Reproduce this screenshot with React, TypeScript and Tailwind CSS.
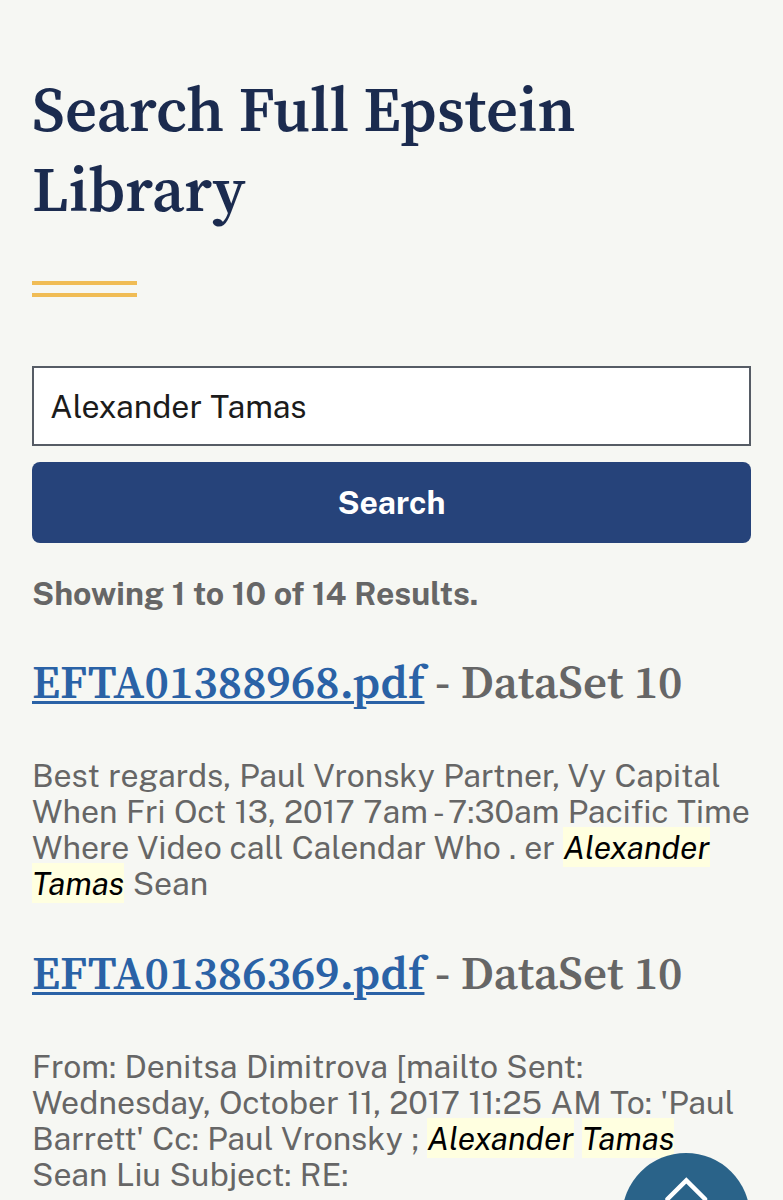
import type { ReactNode } from 'react'

interface Result {
  id: string
  file: string
  dataset: string
  excerpt: ReactNode
}

const results: Result[] = [
  {
    id: '1',
    file: 'EFTA01388968.pdf',
    dataset: 'DataSet 10',
    excerpt: (
      <>
        Best regards, Paul Vronsky Partner, Vy Capital
        <br />
        When Fri Oct 13, 2017 7am - 7:30am Pacific Time
        <br />
        Where Video call Calendar Who . er <Hit>Alexander</Hit>
        <br />
        <Hit>Tamas</Hit> Sean
      </>
    ),
  },
  {
    id: '2',
    file: 'EFTA01386369.pdf',
    dataset: 'DataSet 10',
    excerpt: (
      <>
        From: Denitsa Dimitrova [mailto Sent:
        <br />
        Wednesday, October 11, 2017 11:25 AM To: 'Paul
        <br />
        Barrett' Cc: Paul Vronsky ; <Hit>Alexander</Hit> <Hit>Tamas</Hit>
        <br />
        Sean Liu Subject: RE:
      </>
    ),
  },
]

export default function App() {
  return (
    <div className="relative h-[1200px] w-full overflow-hidden bg-[#f6f7f3] px-8 pt-[69px] font-['Public_Sans','Inter',sans-serif] text-[32px] leading-9 text-[#666]">
      <h1 className="font-['Source_Serif_4','Liberation_Serif',serif] text-[62.5px] font-semibold leading-[80px] tracking-[0.08px] text-[#1b2b4f]">
        Search Full Epstein Library
      </h1>

      <div className="mt-[52px] h-4 w-[105px] border-y-4 border-[#f0bc55]" />

      {/* Search form */}
      <form className="mt-[69px] flex flex-col gap-4" onSubmit={(e) => e.preventDefault()}>
        <input
          type="text"
          defaultValue="Alexander Tamas"
          className="h-20 w-full border-2 border-[#565c65] bg-white px-4 text-[#1b1b1b] outline-none [word-spacing:0.65px]"
        />
        <button type="submit" className="h-[81px] w-full rounded-lg bg-[#26437a] font-bold text-white">
          Search
        </button>
      </form>

      <p className="mt-[33px] font-bold [word-spacing:0.45px]">Showing 1 to 10 of 14 Results.</p>

      {/* Results */}
      <div className="mt-10 flex flex-col gap-[41px]">
        {results.map((result) => (
          <ResultItem key={result.id} result={result} />
        ))}
      </div>

      {/* Back to top */}
      <button
        aria-label="Back to top"
        className="absolute left-[622px] top-[1153px] flex size-32 justify-center rounded-full bg-[#2a6389]"
      >
        <svg width="48" height="40" viewBox="0 0 48 40" className="mt-5" fill="none" stroke="white" strokeWidth="4.5" strokeLinecap="round">
          <path d="M5.5 26 L24.3 7.5 L43 26" />
        </svg>
      </button>
    </div>
  )
}

function ResultItem({ result }: { result: Result }) {
  return (
    <article className="whitespace-nowrap">
      <h3 className="font-['Source_Serif_4','Liberation_Serif',serif] text-[46.8px] font-semibold leading-[60px] tracking-[0.05px]">
        <a href="#" className="text-[#2a62a6] underline decoration-[3px] underline-offset-[3px]">
          {result.file}
        </a>{' '}
        - {result.dataset}
      </h3>
      <p className="mt-[46px] [word-spacing:0.68px]">{result.excerpt}</p>
    </article>
  )
}

function Hit({ children }: { children: ReactNode }) {
  return <em className="bg-[#ffffe0] pb-px pt-0.5 text-black">{children}</em>
}
